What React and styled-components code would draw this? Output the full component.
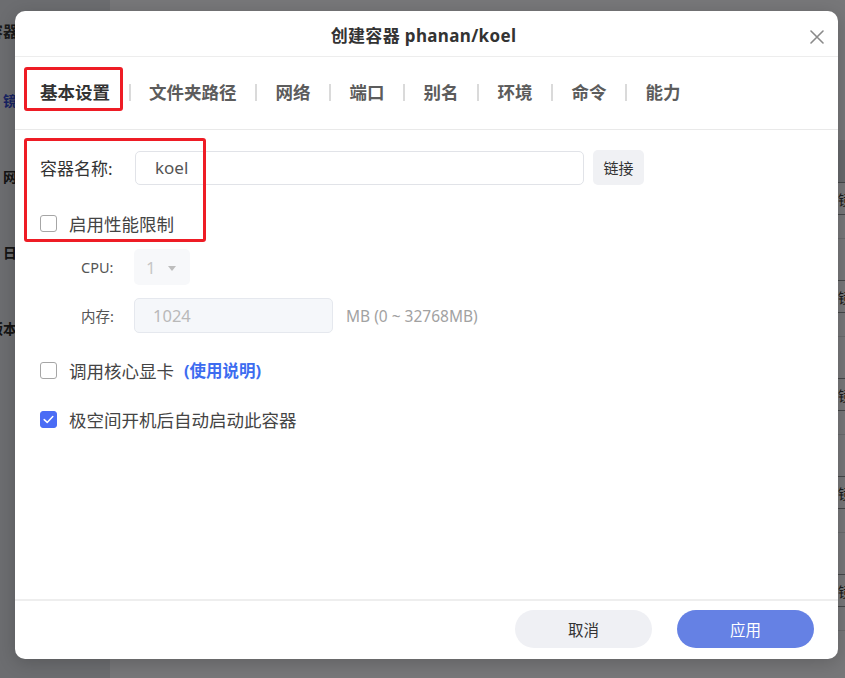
import React from 'react';
import styled, { createGlobalStyle } from 'styled-components';

const Global = createGlobalStyle`
  html, body { margin: 0; padding: 0; width: 845px; height: 678px; overflow: hidden; }
  body { font-family: "Noto Sans", "Noto Sans CJK SC", sans-serif; }
  * { box-sizing: border-box; }
`;

const Screen = styled.div`
  position: relative;
  width: 845px;
  height: 678px;
  display: flex;
  overflow: hidden;
  background: #f2f3f6;
`;

const Sidebar = styled.aside`
  width: 110px;
  flex: none;
  background: #dcdfe4;
  display: flex;
  flex-direction: column;
`;

const NavTitle = styled.div`
  width: 18px;
  height: 62px;
  display: flex;
  justify-content: flex-end;
  align-items: center;
  white-space: nowrap;
  font-size: 15px;
  font-weight: 700;
  color: #333;
  padding-bottom: 2px;
`;

const NavItem = styled.div`
  width: 34px;
  height: 76px;
  display: flex;
  justify-content: center;
  align-items: center;
  white-space: nowrap;
  font-size: 14px;
  font-weight: 700;
  color: ${(p) => (p.$active ? '#3148c9' : '#2a2a2a')};
`;

const Main = styled.main`
  flex: 1;
  display: flex;
  flex-direction: column;
  padding-top: 140px;
`;

const TableHead = styled.div`
  height: 42px;
  background: #d3d6dc;
  flex: none;
`;

const Card = styled.div`
  height: 98px;
  flex: none;
  border-top: 1px solid #8e9196;
  background: #f2f3f6;
`;

const CardHead = styled.div`
  height: 32px;
  border-bottom: 1px solid #8e9196;
  padding-left: 728px;
  display: flex;
  align-items: center;
  white-space: nowrap;
  overflow: hidden;
  font-size: 14px;
  color: #333;
`;

const CardLine = styled.div`
  height: 24px;
  border-bottom: 1px solid #d6d8dc;
`;

const Overlay = styled.div`
  position: absolute;
  inset: 0;
  background: rgba(0, 0, 0, 0.51);
`;

const Modal = styled.div`
  position: absolute;
  left: 15px;
  top: 11px;
  width: 823px;
  height: 648px;
  background: #fff;
  border-radius: 10px;
  display: flex;
  flex-direction: column;
  box-shadow: 0 4px 18px rgba(0, 0, 0, 0.18);
`;

const Header = styled.header`
  height: 46px;
  flex: none;
  display: grid;
  grid-template-columns: 1fr auto 1fr;
  align-items: center;
  padding: 4px 14px 0 0;
  border-bottom: 1px solid #ededed;
`;

const Title = styled.h1`
  grid-column: 2;
  margin: 0 0 0 8px;
  font-size: 17px;
  font-weight: 700;
  color: #333;
  line-height: 1;
  letter-spacing: 0.35px;
`;

const CloseButton = styled.button`
  justify-self: end;
  margin-top: 3px;
  width: 14px;
  height: 14px;
  padding: 0;
  border: none;
  background: none;
  display: flex;
`;

const Tabs = styled.nav`
  height: 73px;
  flex: none;
  display: flex;
  align-items: center;
  gap: 18.5px;
  padding: 0 0 1px 25px;
  border-bottom: 1px solid #e9e9e9;
`;

const Tab = styled.span`
  font-size: 17.5px;
  font-weight: 700;
  line-height: 1;
  color: ${(p) => (p.$active ? '#333' : '#5c5c5c')};
  white-space: nowrap;
`;

const TabSep = styled.span`
  width: 2px;
  height: 17px;
  background: #dadada;
`;

const Content = styled.section`
  flex: 1;
  display: flex;
  flex-direction: column;
  padding: 20px 25px 0;
`;

const Row = styled.div`
  display: flex;
  align-items: center;
  margin-top: ${(p) => p.$gap || 0}px;
`;

const Label = styled.span`
  width: 95px;
  font-size: 17px;
  color: #333;
  white-space: nowrap;
`;

const NameInput = styled.input`
  width: 449px;
  height: 34px;
  border: 1px solid #e1e3e8;
  border-radius: 5px;
  padding: 0 0 0 19px;
  font-family: inherit;
  font-size: 17px;
  color: #555;
  outline: none;
`;

const LinkButton = styled.button`
  margin-left: 9px;
  width: 51px;
  height: 35px;
  border: none;
  border-radius: 5px;
  background: #f0f1f4;
  font-family: inherit;
  font-size: 15px;
  color: #333;
  padding: 0;
`;

const CheckRow = styled.label`
  display: flex;
  align-items: center;
  gap: 12px;
  height: 24px;
  margin-top: ${(p) => p.$gap || 0}px;
`;

const Box = styled.span`
  width: 17px;
  height: 17px;
  flex: none;
  border-radius: 3px;
  border: 1.5px solid ${(p) => (p.$checked ? '#4a6cf5' : '#a6a6a6')};
  background: ${(p) => (p.$checked ? '#4a6cf5' : '#fff')};
  display: flex;
  align-items: center;
  justify-content: center;
`;

const CheckText = styled.span`
  font-size: 17.5px;
  color: #444;
  white-space: nowrap;
`;

const Help = styled.a`
  margin-left: -2px;
  font-size: 16.5px;
  font-weight: 700;
  color: #3d6cf0;
  text-decoration: none;
  white-space: nowrap;
`;

const SubRow = styled.div`
  display: flex;
  align-items: center;
  padding-left: 41px;
  margin-top: ${(p) => p.$gap || 0}px;
`;

const SubLabel = styled.span`
  width: 53px;
  font-size: 14.5px;
  color: #555;
  white-space: nowrap;
`;

const Select = styled.div`
  width: 56px;
  height: 36px;
  border-radius: 5px;
  background: #f7f8fa;
  display: flex;
  align-items: center;
  justify-content: space-between;
  padding: 0 14px 0 12px;
  font-size: 17px;
  color: #c6c6c6;
`;

const Caret = styled.span`
  width: 0;
  height: 0;
  border-left: 4px solid transparent;
  border-right: 4px solid transparent;
  border-top: 5px solid #bdbdbd;
  margin-top: 2px;
`;

const MemInput = styled.input`
  width: 199px;
  height: 35px;
  border: 1px solid #e5e8ee;
  border-radius: 5px;
  background: #f5f7fa;
  padding: 0 0 0 18px;
  font-family: inherit;
  font-size: 16.5px;
  color: #b9b9b9;
  outline: none;
`;

const Unit = styled.span`
  margin-left: 13px;
  font-size: 15.5px;
  color: #a2a2a2;
  white-space: nowrap;
`;

const Footer = styled.footer`
  height: 60px;
  flex: none;
  border-top: 2px solid #eeeeee;
  display: flex;
  justify-content: flex-end;
  align-items: center;
  gap: 25px;
  padding: 0 24px 2px;
`;

const FooterButton = styled.button`
  width: 137px;
  height: 38px;
  border: none;
  border-radius: 19px;
  font-family: inherit;
  font-size: 15.5px;
  background: ${(p) => (p.$primary ? '#6581e4' : '#eff0f4')};
  color: ${(p) => (p.$primary ? '#fff' : '#333')};
`;

const Mark = styled.div`
  position: absolute;
  left: ${(p) => p.$x}px;
  top: ${(p) => p.$y}px;
  width: ${(p) => p.$w}px;
  height: ${(p) => p.$h}px;
  border: 3px solid #ee1c25;
  border-radius: 3px;
  pointer-events: none;
`;

const tabs = ['基本设置', '文件夹路径', '网络', '端口', '别名', '环境', '命令', '能力'];

export default function App() {
  return (
    <>
      <Global />
      <Screen>
        <Sidebar>
          <NavTitle>Docker容器</NavTitle>
          <NavItem $active>镜像</NavItem>
          <NavItem>网络</NavItem>
          <NavItem>日志</NavItem>
          <NavItem>版本信息</NavItem>
        </Sidebar>
        <Main>
          <TableHead />
          {[0, 1, 2, 3, 4].map((i) => (
            <Card key={i}>
              <CardHead>镜像</CardHead>
              <CardLine />
            </Card>
          ))}
        </Main>
        <Overlay />
        <Modal>
          <Header>
            <Title>创建容器 phanan/koel</Title>
            <CloseButton aria-label="关闭">
              <svg width="14" height="14" viewBox="0 0 14 14">
                <path d="M1 1 L13 13 M13 1 L1 13" stroke="#8a8a8a" strokeWidth="1.6" strokeLinecap="round" />
              </svg>
            </CloseButton>
          </Header>
          <Tabs>
            {tabs.map((t, i) => (
              <React.Fragment key={t}>
                {i > 0 && <TabSep />}
                <Tab $active={i === 0}>{t}</Tab>
              </React.Fragment>
            ))}
          </Tabs>
          <Content>
            <Row>
              <Label>容器名称:</Label>
              <NameInput value="koel" readOnly />
              <LinkButton>链接</LinkButton>
            </Row>
            <CheckRow $gap={26}>
              <Box />
              <CheckText>启用性能限制</CheckText>
            </CheckRow>
            <SubRow $gap={14}>
              <SubLabel>CPU:</SubLabel>
              <Select>
                1
                <Caret />
              </Select>
            </SubRow>
            <SubRow $gap={13}>
              <SubLabel>内存:</SubLabel>
              <MemInput value="1024" readOnly />
              <Unit>MB (0 ~ 32768MB)</Unit>
            </SubRow>
            <CheckRow $gap={25}>
              <Box />
              <CheckText>调用核心显卡</CheckText>
              <Help>(使用说明)</Help>
            </CheckRow>
            <CheckRow $gap={25}>
              <Box $checked>
                <svg width="11" height="9" viewBox="0 0 11 9">
                  <path d="M1.2 4.6 L4.2 7.4 L9.8 1.6" fill="none" stroke="#fff" strokeWidth="1.5" strokeLinecap="round" strokeLinejoin="round" />
                </svg>
              </Box>
              <CheckText>极空间开机后自动启动此容器</CheckText>
            </CheckRow>
          </Content>
          <Footer>
            <FooterButton>取消</FooterButton>
            <FooterButton $primary>应用</FooterButton>
          </Footer>
          <Mark $x={9} $y={56} $w={99} $h={44} />
          <Mark $x={9} $y={127} $w={182} $h={104} />
        </Modal>
      </Screen>
    </>
  );
}
